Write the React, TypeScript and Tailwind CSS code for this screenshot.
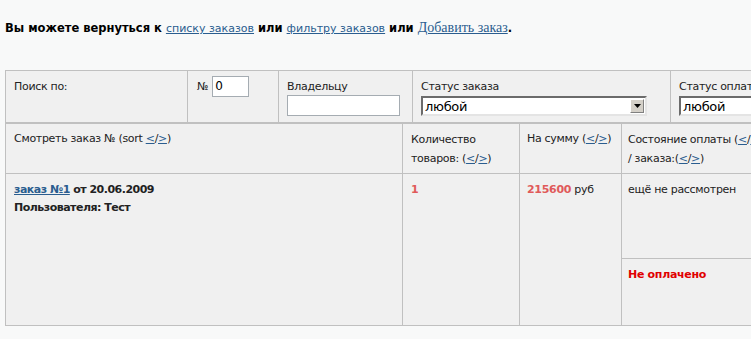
import React from 'react';

const font = "font-['DejaVu_Sans',sans-serif]";

const LtGt = () => (
    <>
        <a className="text-[#2a5d8f] underline">&lt;</a>/<a className="text-[#2a5d8f] underline">&gt;</a>
    </>
);

const Sort = () => (
    <>
        (<LtGt />)
    </>
);

const FakeSelect = ({ className }: { className: string }) => (
    <div className={`flex h-[20px] items-center bg-white border-2 border-t-[#6b6b6b] border-l-[#6b6b6b] border-b-[#e4e4e4] border-r-[#e4e4e4] ${className}`}>
        <span className="flex-1 pl-[2px] text-[13px] leading-none text-black tracking-[-0.3px]">любой</span>
        <span className="mr-[1px] flex h-[14px] w-[14px] items-center justify-center bg-[#d4d0c8] border border-t-white border-l-white border-b-[#808080] border-r-[#808080]">
            <svg width="7" height="4" viewBox="0 0 7 4">
                <path d="M0 0h7L3.5 4z" fill="#000" />
            </svg>
        </span>
    </div>
);

const App = () => {
    return (
        <div className={`h-[339px] w-[751px] overflow-hidden bg-[#f8f9f9] ${font} text-[11px] text-[#222]`}>
            {/* Back links */}
            <div className="pl-[5px] pt-[21px] h-[70px] text-[11.5px] leading-[14px] font-bold text-black">
                Вы можете вернуться к{' '}
                <a className="text-[11px] font-normal text-[#2a5d8f] underline">списку заказов</a> или{' '}
                <a className="text-[11px] font-normal text-[#2a5d8f] underline">фильтру заказов</a> или{' '}
                <a className="font-['Liberation_Serif',serif] text-[14px] font-normal text-[#2a5d8f] underline">Добавить заказ</a>.
            </div>

            <div className="ml-[5px] w-[845px] tracking-[-0.3px]">
                {/* Search row */}
                <div className="flex h-[53px] border border-[#c0c0c0] bg-[#f0f0f0]">
                    <div className="w-[182px] border-r border-[#c0c0c0] pl-[8px] pt-[7px] leading-[18px]">Поиск по:</div>
                    <div className="w-[91px] border-r border-[#c0c0c0] pl-[9px] pt-[5px] flex items-start gap-[4px]">
                        <span className="leading-[21px]">№</span>
                        <div className="h-[21px] w-[37px] border border-[#a5acb2] bg-white pl-[2px] text-[12px] leading-[19px] text-black">0</div>
                    </div>
                    <div className="w-[134px] border-r border-[#c0c0c0] pl-[8px] pt-[7px]">
                        <div className="leading-[17px]">Владельцу</div>
                        <div className="h-[21px] w-[113px] border border-[#a5acb2] bg-white" />
                    </div>
                    <div className="w-[258px] border-r border-[#c0c0c0] pl-[8px] pt-[7px]">
                        <div className="leading-[18px]">Статус заказа</div>
                        <FakeSelect className="w-[226px]" />
                    </div>
                    <div className="flex-1 pl-[8px] pt-[7px]">
                        <div className="leading-[18px] whitespace-nowrap">Статус оплаты</div>
                        <FakeSelect className="w-[160px]" />
                    </div>
                </div>

                {/* Orders */}
                <div className="border border-[#c0c0c0] bg-[#f0f0f0] leading-[18px]">
                    <div className="flex h-[50px] border-b border-[#c0c0c0]">
                        <div className="w-[397px] border-r border-[#c0c0c0] pl-[8px] pt-[6px]">
                            Смотреть заказ № (sort <LtGt />)
                        </div>
                        <div className="w-[117px] border-r border-[#c0c0c0] pl-[8px] pt-[6px] leading-[19px]">
                            Количество<br />товаров: <Sort />
                        </div>
                        <div className="w-[102px] border-r border-[#c0c0c0] pl-[7px] pt-[6px]">
                            На сумму <Sort />
                        </div>
                        <div className="flex-1 pl-[6px] pt-[6px] leading-[19px]">
                            Состояние оплаты <Sort /><br />/ заказа:<Sort />
                        </div>
                    </div>
                    <div className="flex h-[151px]">
                        <div className="w-[397px] border-r border-[#c0c0c0] pl-[8px] pt-[7px] font-bold tracking-[-0.5px]">
                            <div>
                                <a className="text-[#2a5d8f] underline">заказ №1</a> от 20.06.2009
                            </div>
                            <div>Пользователя: Тест</div>
                        </div>
                        <div className="w-[117px] border-r border-[#c0c0c0] pl-[8px] pt-[7px] font-bold text-[#e05a5a]">1</div>
                        <div className="w-[102px] border-r border-[#c0c0c0] pl-[7px] pt-[7px]">
                            <span className="font-bold text-[#e05a5a]">215600</span> руб
                        </div>
                        <div className="flex flex-1 flex-col">
                            <div className="h-[85px] border-b border-[#c0c0c0] pl-[6px] pt-[7px]">ещё не рассмотрен</div>
                            <div className="pl-[6px] pt-[7px] font-bold text-[#e00000]">Не оплачено</div>
                        </div>
                    </div>
                </div>
            </div>
        </div>
    );
};

export default App;
